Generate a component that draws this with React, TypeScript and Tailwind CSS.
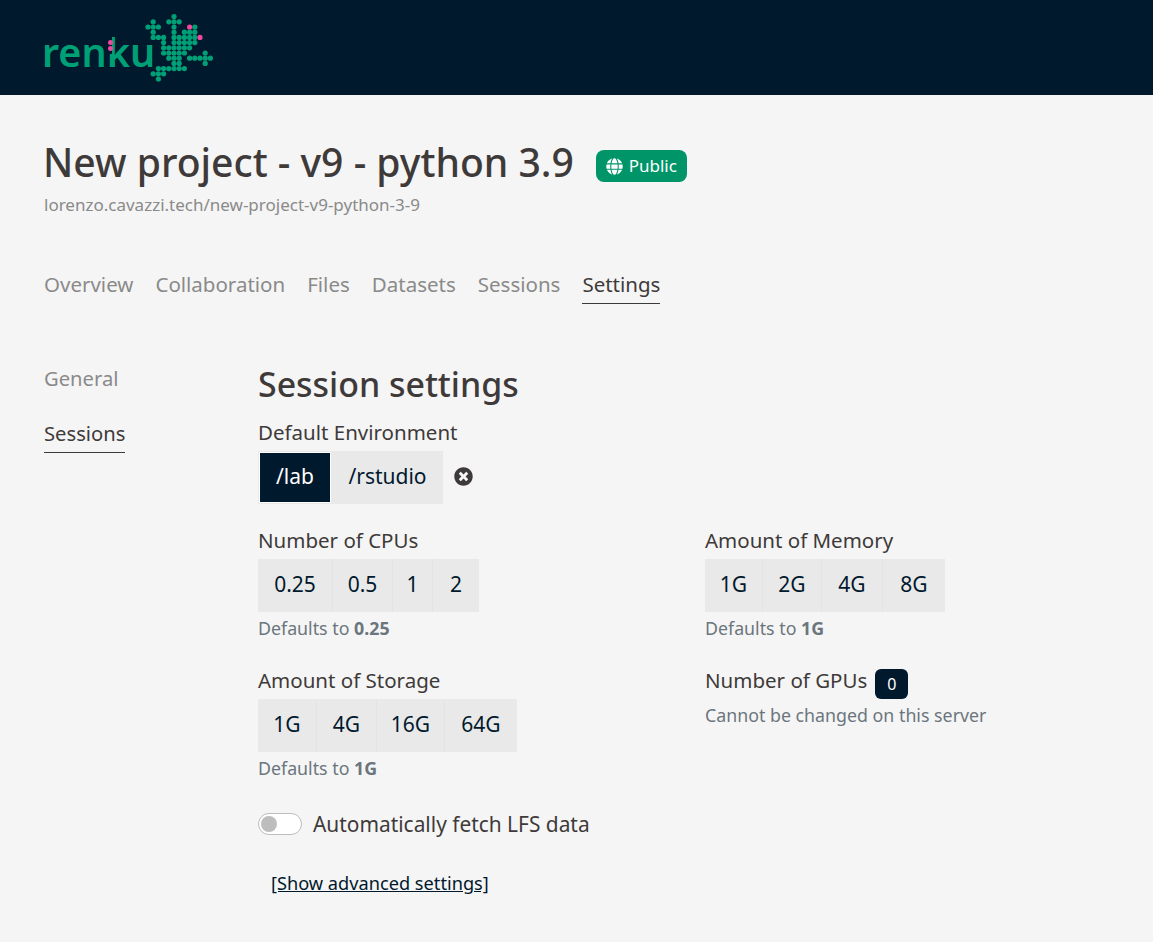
import { FaGlobe, FaTimesCircle } from "react-icons/fa";

// frog logo: rows of column indexes on a dot grid
const frog: number[][] = [
  [5],
  [1, 4, 5, 6],
  [0, 1, 2, 5, 9],
  [1, 5, 7, 8, 9],
  [1, 2, 3, 5, 6, 7, 8, 9],
  [3, 5, 6, 7, 8, 9],
  [3, 4, 5, 6, 7, 8],
  [3, 4, 5, 6, 7, 11],
  [4, 5, 6, 8, 9, 10, 11, 12],
  [5, 6, 11],
  [2, 3, 4, 5, 6, 7],
  [1, 2, 3],
  [2],
];

function Logo() {
  return (
    <div className="flex items-center">
      <div className="relative w-[100px] h-[66px]">
        <span className="absolute left-[-2px] top-[4px] text-[39.5px] leading-[66px] font-semibold text-[#00a077] font-['Noto_Sans',sans-serif]">
          renku
        </span>
        <div className="absolute left-[61px] top-0 w-[7px] h-[39px] bg-[#01192d]" />
        <div className="absolute left-[64px] top-[25px] w-[5px] h-[5px] rounded-full bg-[#f0479c]" />
        <div className="absolute left-[64px] top-[31px] w-[5px] h-[5px] rounded-full bg-[#f0479c]" />
      </div>
      <svg width="70" height="70" viewBox="0 0 70 70" className="ml-[1px]">
        {frog.map((row, r) =>
          row.map((c) => (
            <circle key={`${r}-${c}`} cx={3 + c * 5.2} cy={3.6 + r * 5.2} r="2.6" fill="#00a077" />
          )),
        )}
        <circle cx={3 + 8 * 5.2} cy={3.6 + 2 * 5.2} r="2.6" fill="#f0479c" />
        <circle cx={3 + 10 * 5.2} cy={3.6 + 4 * 5.2} r="2.6" fill="#f0479c" />
      </svg>
    </div>
  );
}

function OptionGroup({ options }: { options: { label: string; width: string }[] }) {
  return (
    <div className="flex h-[53px] mt-[3px] w-fit bg-[#e9e9e9]">
      {options.map((o, i) => (
        <button
          key={o.label}
          className={`${o.width} h-full pb-[3px] text-[21px] text-[#01192d] ${i > 0 ? "border-l border-[#e3e4e5]" : ""}`}
        >
          {o.label}
        </button>
      ))}
    </div>
  );
}

function Hint({ children }: { children: React.ReactNode }) {
  return <p className="mt-1 text-[17.8px] leading-6 text-[#6c757d]">{children}</p>;
}

export default function App() {
  return (
    <div className="min-h-[942px] bg-[#f5f5f5] text-[#3e3a39] font-['Noto_Sans',sans-serif]">
      <header className="h-[95px] bg-[#01192d] flex items-center pl-11 pt-[1px]">
        <Logo />
      </header>

      <main className="px-11 pt-[38px]">
        <div className="flex h-[58px] items-center">
          <h1 className="ml-[-1px] text-[39.1px] leading-[58px] font-medium">New project - v9 - python 3.9</h1>
          <span className="ml-[22px] mt-2 flex h-8 w-[91px] items-center justify-center gap-1.5 rounded-lg bg-[#009568] text-[17px] text-white">
            <FaGlobe className="text-[17px]" />
            Public
          </span>
        </div>
        <p className="mt-[2px] text-[17px] leading-6 text-[#8a8a8a]">lorenzo.cavazzi.tech/new-project-v9-python-3-9</p>

        <nav className="mt-[53px] flex gap-[22px] text-[20.5px] leading-[28px] text-[#8a8a8a]">
          <a className="pb-[5px]">Overview</a>
          <a className="pb-[5px]">Collaboration</a>
          <a className="pb-[5px]">Files</a>
          <a className="pb-[5px]">Datasets</a>
          <a className="pb-[5px]">Sessions</a>
          <a className="pb-[5px] border-b border-[#3e3a39] text-[#3e3a39]">Settings</a>
        </nav>

        <div className="mt-[59px] flex">
          <aside className="w-[214px] shrink-0 pt-px text-[20.2px] leading-[28px] text-[#8a8a8a]">
            <div className="flex flex-col items-start gap-[22px]">
              <a className="pb-[5px]">General</a>
              <a className="pb-[5px] border-b border-[#3e3a39] text-[#3e3a39]">Sessions</a>
            </div>
          </aside>

          <section className="flex-1 text-[20.5px] leading-[28px]">
            <h2 className="pb-[2px] text-[33.9px] leading-[42px] font-medium">Session settings</h2>

            <label className="mt-[11px] block pb-[2px]">Default Environment</label>
            <div className="mt-[3px] flex items-center">
              <div className="flex h-[53px] bg-[#e9e9e9] text-[21px] text-[#01192d]">
                <button className="w-[74px] border border-[#e9e9e9]">
                  <span className="flex h-full w-full items-center justify-center border border-white bg-[#01192d] pb-[3px] text-white">
                    /lab
                  </span>
                </button>
                <button className="w-[111px] pb-[3px]">/rstudio</button>
              </div>
              <FaTimesCircle className="ml-[11px] mb-[2px] text-[19px] text-[#3e3a39]" />
            </div>

            <div className="mt-[22px] grid grid-cols-[447px_1fr] gap-y-[26px]">
              <div>
                <label className="block pb-[2px]">Number of CPUs</label>
                <OptionGroup
                  options={[
                    { label: "0.25", width: "w-[74px]" },
                    { label: "0.5", width: "w-[60px]" },
                    { label: "1", width: "w-[40px]" },
                    { label: "2", width: "w-[47px]" },
                  ]}
                />
                <Hint>
                  Defaults to <b>0.25</b>
                </Hint>
              </div>
              <div>
                <label className="block pb-[2px]">Amount of Memory</label>
                <OptionGroup
                  options={[
                    { label: "1G", width: "w-[57px]" },
                    { label: "2G", width: "w-[59px]" },
                    { label: "4G", width: "w-[61px]" },
                    { label: "8G", width: "w-[63px]" },
                  ]}
                />
                <Hint>
                  Defaults to <b>1G</b>
                </Hint>
              </div>
              <div>
                <label className="block pb-[2px]">Amount of Storage</label>
                <OptionGroup
                  options={[
                    { label: "1G", width: "w-[58px]" },
                    { label: "4G", width: "w-[60px]" },
                    { label: "16G", width: "w-[68px]" },
                    { label: "64G", width: "w-[73px]" },
                  ]}
                />
                <Hint>
                  Defaults to <b>1G</b>
                </Hint>
              </div>
              <div>
                <div className="flex items-start gap-2">
                  <label>Number of GPUs</label>
                  <span className="mt-[3px] flex h-[30px] w-[33px] items-center justify-center rounded-md bg-[#01192d] text-[16px] text-white">
                    0
                  </span>
                </div>
                <p className="mt-[4px] text-[17.8px] leading-6 text-[#6c757d]">Cannot be changed on this server</p>
              </div>
            </div>

            <div className="mt-[30px] flex items-center gap-[11px]">
              <span className="flex h-[22px] w-[44px] items-center rounded-full border border-[#bdbdbd] bg-white pl-[2px]">
                <span className="h-4 w-4 rounded-full bg-[#bdbdbd]" />
              </span>
              <span className="text-[20.9px]">Automatically fetch LFS data</span>
            </div>

            <a className="ml-[13px] mt-[32px] inline-block text-[18.2px] leading-[26px] text-[#01192d] underline">
              [Show advanced settings]
            </a>
          </section>
        </div>
      </main>
    </div>
  );
}
